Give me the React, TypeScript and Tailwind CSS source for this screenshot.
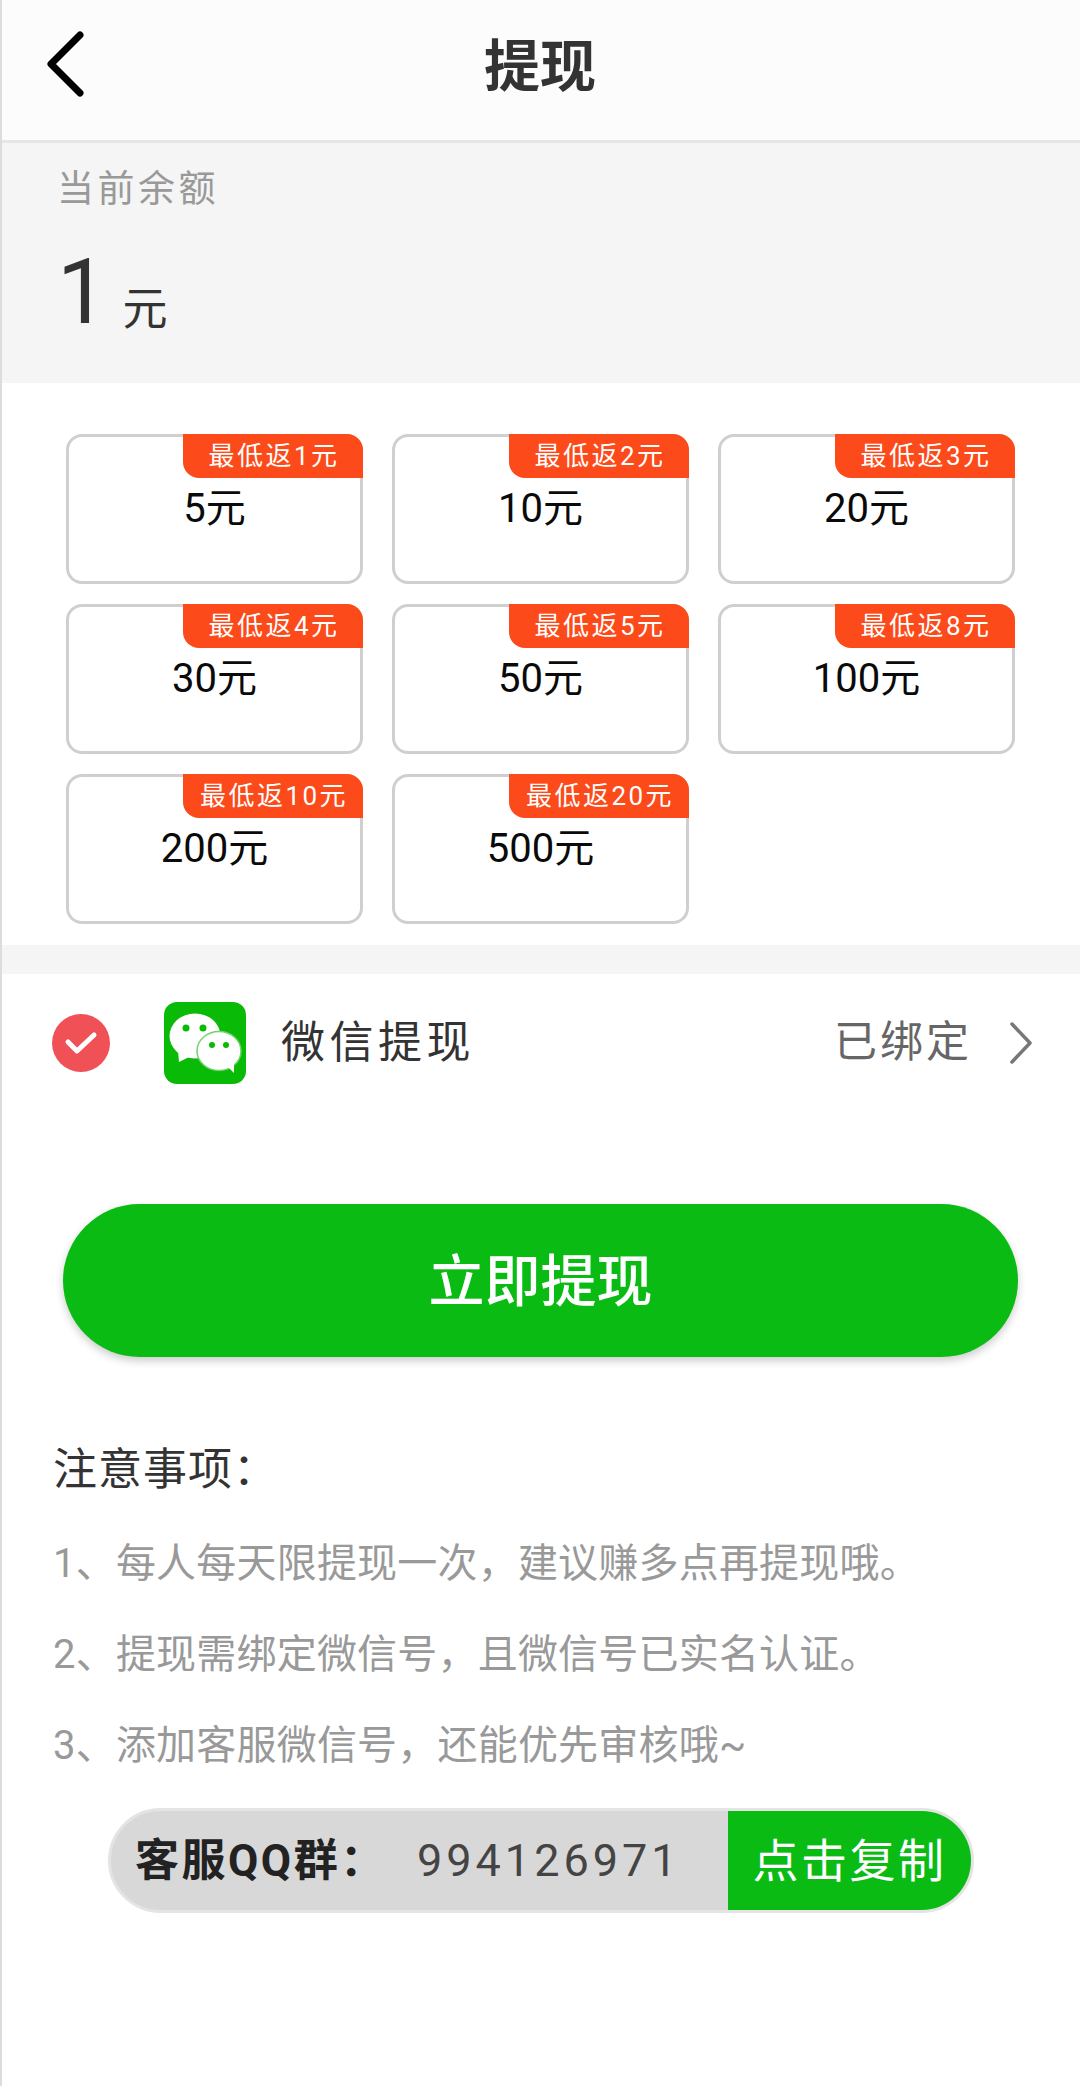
const AMOUNTS = [
  { value: "5元", rebate: "最低返1元" },
  { value: "10元", rebate: "最低返2元" },
  { value: "20元", rebate: "最低返3元" },
  { value: "30元", rebate: "最低返4元" },
  { value: "50元", rebate: "最低返5元" },
  { value: "100元", rebate: "最低返8元" },
  { value: "200元", rebate: "最低返10元" },
  { value: "500元", rebate: "最低返20元" },
];

const NOTES = [
  "1、每人每天限提现一次，建议赚多点再提现哦。",
  "2、提现需绑定微信号，且微信号已实名认证。",
  "3、添加客服微信号，还能优先审核哦~",
];

function WechatLogo() {
  return (
    <svg width="82" height="82" viewBox="0 0 82 82" className="block">
      <rect x="0" y="0" width="82" height="82" rx="13" fill="#09BB07" />
      <ellipse cx="31" cy="34" rx="25.500" ry="22.500" fill="#fff" />
      <path d="M14 49 L15 60 L27 54 Z" fill="#fff" />
      <circle cx="22" cy="26" r="3.500" fill="#09BB07" />
      <circle cx="39" cy="26" r="3.500" fill="#09BB07" />
      <ellipse cx="55" cy="49" rx="22" ry="19.500" fill="#fff" stroke="#6fd36b" strokeWidth="1.500" />
      <path d="M63 64 L70 71 L70 58 Z" fill="#fff" />
      <circle cx="48" cy="43" r="3" fill="#09BB07" />
      <circle cx="62" cy="43" r="3" fill="#09BB07" />
    </svg>
  );
}

export default function App() {
  return (
    <div
      className="w-[1080px] h-[2086px] bg-white border-l-2 border-[#dcdcdc] overflow-hidden text-[#333]"
      style={{ fontFamily: 'Roboto, "Noto Sans CJK SC", sans-serif' }}
    >
      {/* 顶部栏 */}
      <div className="relative h-[143px] bg-[#fcfcfc] border-b-[3px] border-[#e6e6e6] flex items-center justify-center">
        <svg width="48" height="76" viewBox="0 0 48 76" className="absolute left-[38px] top-[28px]">
          <path d="M40 7 L11 36 L40 65" fill="none" stroke="#000" strokeWidth="7" strokeLinecap="round" strokeLinejoin="round" />
        </svg>
        <span className="ml-[-2px] mt-[-6px] text-[56px] leading-none font-bold text-[#333]">提现</span>
      </div>

      {/* 余额 */}
      <div className="h-[240px] bg-[#f5f5f5] pl-[55px] pt-[22px]">
        <p className="text-[37px] leading-[50px] tracking-[3.500px] text-[#999]">当前余额</p>
        <div className="mt-[33px] flex items-end">
          <span className="text-[90px] leading-[90px] text-[#333]">1</span>
          <span className="ml-[15px] mb-[-2px] text-[45px] leading-[60px] text-[#333]">元</span>
        </div>
      </div>

      {/* 金额选择 */}
      <div className="grid grid-cols-[297px_297px_297px] gap-x-[29px] gap-y-[20px] pl-[64px] pt-[51px] pb-[21px]">
        {AMOUNTS.map((item) => (
          <div key={item.value} className="relative h-[150px] rounded-[16px] border-[3px] border-[#cfcfcf] bg-white">
            <div className="absolute right-[-3px] top-[-3px] flex h-[44px] w-[180px] items-center justify-center rounded-tr-[16px] rounded-bl-[16px] bg-[#fc4a1a] pl-[2px] text-[26px] leading-none tracking-[2.500px] text-[#fff]">
              {item.rebate}
            </div>
            <div className="pt-[47px] text-center text-[40px] leading-[50px] text-[#0a0a0a]">{item.value}</div>
          </div>
        ))}
      </div>

      <div className="h-[29px] bg-[#f5f5f5]" />

      {/* 提现方式 */}
      <div className="flex h-[140px] items-center pl-[50px] pr-[46px] pb-[3px]">
        <div className="flex h-[58px] w-[58px] items-center justify-center rounded-full bg-[#ef5157]">
          <svg width="34" height="26" viewBox="0 0 34 26">
            <path d="M4 12 L13 21 L30 5" fill="none" stroke="#fff" strokeWidth="5" strokeLinecap="round" strokeLinejoin="round" />
          </svg>
        </div>
        <div className="ml-[54px]">
          <WechatLogo />
        </div>
        <span className="ml-[35px] text-[44px] leading-none tracking-[4.500px] text-[#333]">微信提现</span>
        <span className="ml-auto text-[43px] leading-none tracking-[3px] text-[#666]">已绑定</span>
        <svg width="26" height="44" viewBox="0 0 26 44" className="ml-[36px]">
          <path d="M4 3 L22 22 L4 41" fill="none" stroke="#777" strokeWidth="3.500" strokeLinecap="round" strokeLinejoin="round" />
        </svg>
      </div>

      {/* 按钮 */}
      <div className="ml-[61px] mt-[90px] flex h-[153px] w-[955px] items-center justify-center rounded-full bg-[#0abb14] pt-[3px] shadow-[0_4px_8px_rgba(0,0,0,0.2)] text-[56px] font-medium leading-none text-white">
        立即提现
      </div>

      {/* 注意事项 */}
      <div className="pl-[51px] pt-[85px]">
        <p className="text-[44px] leading-[56px] tracking-[1px] text-[#333]">注意事项：</p>
        <div className="mt-[40px] flex flex-col gap-[39px]">
          {NOTES.map((note) => (
            <p key={note} className="text-[40px] leading-[52px] tracking-[0.200px] text-[#999]">{note}</p>
          ))}
        </div>
      </div>

      {/* 客服QQ群 */}
      <div className="ml-[106px] mt-[36px] flex h-[105px] w-[866px] overflow-hidden rounded-full border-[3px] border-[#e4e4e4] bg-[#d8d8d8]">
        <div className="flex flex-1 items-center pl-[24px]">
          <span className="w-[267px] shrink-0 text-[44px] font-bold leading-none tracking-[2.500px] text-[#222]">客服QQ群：</span>
          <span className="ml-[15px] text-[45px] leading-none tracking-[4px] text-[#444]">994126971</span>
        </div>
        <div className="flex w-[243px] items-center justify-center bg-[#0abb14] text-[46px] leading-none tracking-[2.500px] text-white">
          点击复制
        </div>
      </div>
    </div>
  );
}
